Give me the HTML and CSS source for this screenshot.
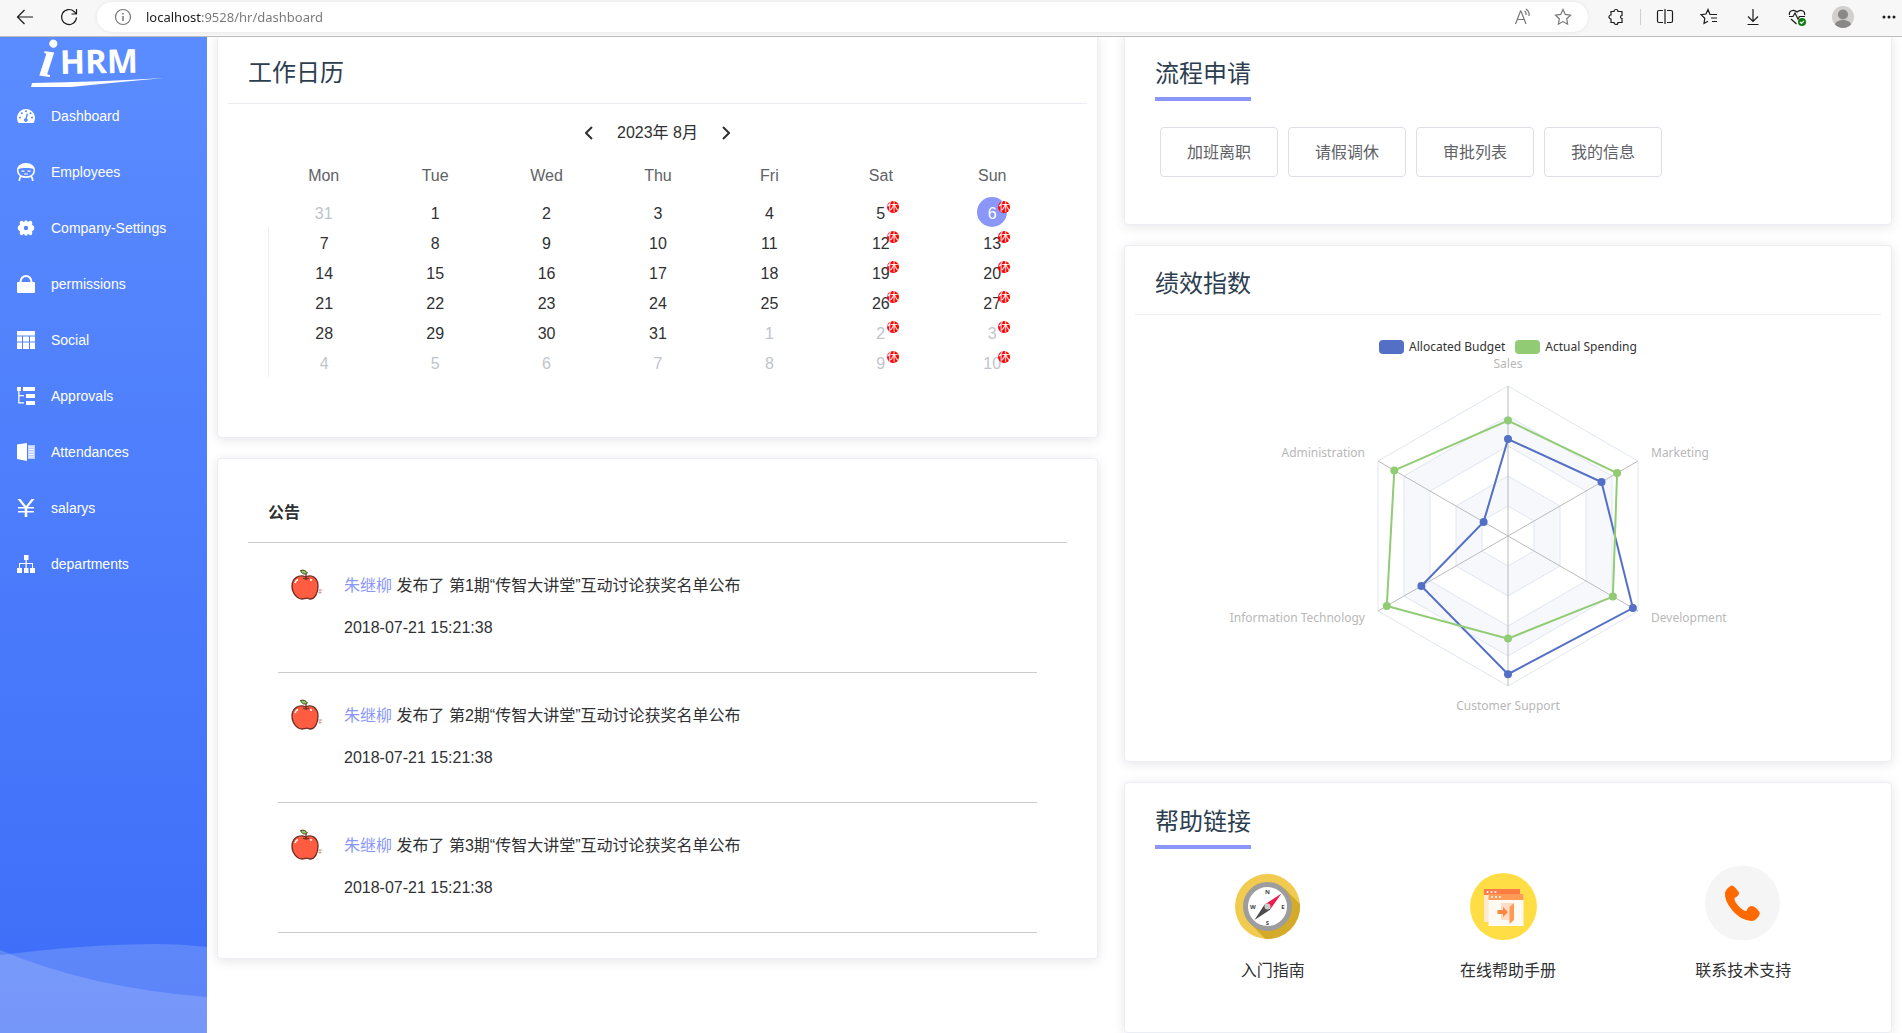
FILE: index.html
```html
<!DOCTYPE html>
<html lang="zh-CN">
<head>
<meta charset="utf-8">
<title>iHRM</title>
<link rel="stylesheet" href="styles.css">
</head>
<body>
<header class="browser">
  <button class="nav-btn" type="button" aria-label="Back"><svg width="18" height="18" viewBox="0 0 18 18"><path d="M17 9H1.500M8.500 2L1.500 9l7 7"/></svg></button>
  <button class="nav-btn" type="button" aria-label="Refresh"><svg width="18" height="18" viewBox="0 0 18 18"><path d="M16.500 9.500a7.500 7.500 0 1 1-2.200-5.800L16.500 6M16.500 1v5h-5"/></svg></button>
  <div class="address">
    <svg class="soft" width="18" height="18" viewBox="0 0 18 18"><circle cx="9" cy="9" r="7.500"/><path d="M9 8v5M9 5v1.500" stroke-width="1.500"/></svg>
    <input class="url" type="text" aria-label="Address" value="localhost:9528/hr/dashboard">
    <button class="addr-btn" type="button" aria-label="Read aloud"><svg class="soft" width="18" height="18" viewBox="0 0 18 18"><path d="M1.500 16L6.500 3h.500l5 13M3.500 11.500h7M10.500 3a4 4 0 0 1 1.500 4M12 1a7 7 0 0 1 3 7"/></svg></button>
    <button class="addr-btn" type="button" aria-label="Add to favourites"><svg class="soft" width="18" height="18" viewBox="0 0 18 18"><path d="M9 1.500l2.300 4.900 5.200.700-3.800 3.700.900 5.400L9 13.600l-4.600 2.600.900-5.400L1.500 7.100l5.200-.700z"/></svg></button>
  </div>
  <div class="tools">
    <button class="tool" type="button" aria-label="Extensions"><svg width="18" height="18" viewBox="0 0 18 18"><path d="M4 3.500h3a2 2 0 0 1 4 0h4v4a1.500 1.500 0 0 0-1.500 1.500 1.500 1.500 0 0 0 1.500 1.500v4h-4a2 2 0 0 1-4 0H4V11a2 2 0 0 1 0-4z"/></svg></button>
    <span class="sep"></span>
    <button class="tool" type="button" aria-label="Split screen"><svg width="18" height="18" viewBox="0 0 18 18"><path d="M7 2.500H3a1.500 1.500 0 0 0-1.500 1.500v9A1.500 1.500 0 0 0 3 14.500h4M11 2.500h4A1.500 1.500 0 0 1 16.500 4v9a1.500 1.500 0 0 1-1.500 1.500h-4M9 1v15"/></svg></button>
    <button class="tool" type="button" aria-label="Favourites"><svg width="18" height="18" viewBox="0 0 18 18"><path d="M12 6.500H10L8 1.500 6 6l-5 .700 3.800 3.600L4 15.500l4-2.200M11 6.500h6M11 10h6M12 13.500h5"/></svg></button>
    <button class="tool" type="button" aria-label="Downloads"><svg width="18" height="18" viewBox="0 0 18 18"><path d="M9 1v12M4 8.500l5 5 5-5M3.500 16.500h11"/></svg></button>
    <button class="tool" type="button" aria-label="Browser essentials"><svg width="18" height="18" viewBox="0 0 18 18"><path d="M1.500 7C.500 3 5.500.500 9 4c3.500-3.500 8.500-1 7.500 3M1 8.500h4L7 5l3 6 1.500-2.500H17M3 11l5.500 5"/><circle cx="14" cy="14" r="4" fill="#107c10" stroke="none"/><path d="M12 14l1.500 1.500L16 12.800" stroke="#fff"/></svg></button>
    <button class="tool tool-avatar" type="button" aria-label="Profile"><svg class="avatar" width="22" height="22" viewBox="0 0 22 22"><circle cx="11" cy="11" r="11" fill="#d2d0ce"/><circle cx="11" cy="8.500" r="5" fill="#8a8886"/><path d="M3 18.500c1-6 15-6 16 0a11 11 0 0 1-16 0z" fill="#8a8886"/></svg></button>
    <button class="tool tool-more" type="button" aria-label="More"><svg width="16" height="4" viewBox="0 0 16 4"><g fill="#1b1b1b" stroke="none"><circle cx="3" cy="2" r="1.500"/><circle cx="8" cy="2" r="1.500"/><circle cx="13" cy="2" r="1.500"/></g></svg></button>
  </div>
</header>

<div class="app">
  <aside class="sidebar">
    <a class="logo" href="#" aria-label="iHRM">
      <svg width="207" height="51" viewBox="0 0 207 51">
        <text class="logo-i" x="38" y="39" transform="rotate(8 44 39)">i</text>
        <text class="logo-name" x="60" y="37" transform="rotate(-1 60 37)">HRM</text>
        <path d="M32 46Q100 45 164 41Q120 45 71 50H31z"/>
      </svg>
    </a>
    <nav class="menu">
      <a href="#"><svg width="18" height="18" viewBox="0 0 18 18"><path fill-rule="evenodd" d="M1.500 16A9 9 0 1 1 16.500 16zM3 9.500a1 1 0 1 0 0 2 1 1 0 0 0 0-2zM4.800 5.300a1 1 0 1 0 0 2 1 1 0 0 0 0-2zM9 3.300a1 1 0 1 0 0 2 1 1 0 0 0 0-2zM13.500 5.300a1 1 0 1 0 0 2 1 1 0 0 0 0-2zM15 9.500a1 1 0 1 0 0 2 1 1 0 0 0 0-2zM9.700 6.500l-1.200 4.700a1.800 1.800 0 1 0 1.400.300l1.200-4.700z"/></svg>Dashboard</a>
      <a href="#"><svg width="18" height="18" viewBox="0 0 18 18"><path fill-rule="evenodd" d="M9 0c5 0 9 3 9 7 0 3-1 5-3 6 1 1 1.500 3 1.500 5H15l-1-3.800q-5 1.600-10 0L3 18H1.500c0-2 .500-4 1.500-5-2-1-3-3-3-6 0-4 4-7 9-7zM1.500 6c0 5 2 7.200 7.500 7.200s7.500-2.200 7.500-7.200c-2-1-4-1-7.500-1s-5.500 0-7.500 1z"/><path d="M4.500 7.500h3v1.300h-3zM10.500 7.500h3v1.300h-3zM7 10.500h4v1H7z"/></svg>Employees</a>
      <a href="#"><svg width="18" height="18" viewBox="0 0 18 18"><path fill-rule="evenodd" d="M7 3.200q.500-2 2-2t2 2q2-2 3.500-1.200 1.500 1.500.500 3.700 2.500.800 2.300 3.300 0 2.500-2.300 3.300 1 2.200-.500 3.700-1.500.800-3.500-1.200-.500 2-2 2t-2-2q-2 2-3.500 1.200-1.500-1.500-.500-3.700Q.700 11.500.700 9 .500 6.500 3 5.700 2 3.500 3.500 2 5 1.200 7 3.200zM9 6.800a2.200 2.200 0 1 0 0 4.400 2.200 2.200 0 0 0 0-4.400z"/></svg>Company-Settings</a>
      <a href="#"><svg width="18" height="18" viewBox="0 0 18 18"><path fill-rule="evenodd" d="M2.500 7a6.500 7 0 0 1 13 0H17a1 1 0 0 1 1 1v9a1 1 0 0 1-1 1H1a1 1 0 0 1-1-1V8a1 1 0 0 1 1-1zM4.500 7h9a4.500 5 0 0 0-9 0z"/></svg>permissions</a>
      <a href="#"><svg width="18" height="18" viewBox="0 0 18 18"><path d="M0 0h18v4.500H0zM0 5.500h5v5H0zM6 5.500h6v5H6zM13 5.500h5v5h-5zM0 11.500h5V18H0zM6 11.500h6V18H6zM13 11.500h5V18h-5z"/></svg>Social</a>
      <a href="#"><svg width="18" height="18" viewBox="0 0 18 18"><path d="M0 0h4v4H2.500v4H7v1.300H2.500v6H7v1.300H1.200V4H0zM6 0h12v4H6zM9 7h9v4H9zM9 14h9v4H9z"/></svg>Approvals</a>
      <a href="#"><svg width="18" height="18" viewBox="0 0 18 18"><path d="M0 1.500L10 0v18L0 16z"/><path opacity=".6" d="M11 2h7v14h-7z"/><path d="M11.500 4H17M11.500 6.500H17M11.500 9H17M11.500 11.500H17M11.500 14H17" stroke="#fff"/></svg>Attendances</a>
      <a href="#"><svg width="18" height="18" viewBox="0 0 18 18"><path d="M.500 0h3L9 7l5.500-7h3l-6.500 8h6v1.500h-6.700V12H17v1.500h-6.700V18H7.700v-4.500H1V12h6.700V9.500H1V8h6z"/></svg>salarys</a>
      <a href="#"><svg width="18" height="18" viewBox="0 0 18 18"><path d="M7 0h4.500v5h-1.700v3H16v5h2v5h-5v-5h2V9H9.800v4h1.700v5H7v-5h1.500V9H3v4h2v5H0v-5h2V8h6.500V5H7z"/></svg>departments</a>
    </nav>
    <svg class="waves" width="207" height="90" viewBox="0 0 207 90" preserveAspectRatio="none"><path d="M0 12Q90 1 155 1Q182 1 207 4V90H0z"/><path d="M0 7Q90 45 207 54V90H0z"/></svg>
  </aside>

  <main class="main">
    <div class="column">
      <section class="card calendar-card">
        <h2 class="title ruled">工作日历</h2>
        <div class="month">
          <button type="button" aria-label="Previous month"><svg width="8" height="14" viewBox="0 0 8 14"><path d="M7 1L1 7l6 6"/></svg></button>
          <span>2023年 8月</span>
          <button type="button" aria-label="Next month"><svg width="8" height="14" viewBox="0 0 8 14"><path d="M1 1l6 6-6 6"/></svg></button>
        </div>
        <table class="calendar">
          <thead><tr><th>Mon</th><th>Tue</th><th>Wed</th><th>Thu</th><th>Fri</th><th>Sat</th><th>Sun</th></tr></thead>
          <tbody>
            <tr><td class="other">31</td><td>1</td><td>2</td><td>3</td><td>4</td><td><span class="day">5<i>休</i></span></td><td><span class="day today">6<i>休</i></span></td></tr>
            <tr><td>7</td><td>8</td><td>9</td><td>10</td><td>11</td><td><span class="day">12<i>休</i></span></td><td><span class="day">13<i>休</i></span></td></tr>
            <tr><td>14</td><td>15</td><td>16</td><td>17</td><td>18</td><td><span class="day">19<i>休</i></span></td><td><span class="day">20<i>休</i></span></td></tr>
            <tr><td>21</td><td>22</td><td>23</td><td>24</td><td>25</td><td><span class="day">26<i>休</i></span></td><td><span class="day">27<i>休</i></span></td></tr>
            <tr><td>28</td><td>29</td><td>30</td><td>31</td><td class="other">1</td><td class="other"><span class="day">2<i>休</i></span></td><td class="other"><span class="day">3<i>休</i></span></td></tr>
            <tr><td class="other">4</td><td class="other">5</td><td class="other">6</td><td class="other">7</td><td class="other">8</td><td class="other"><span class="day">9<i>休</i></span></td><td class="other"><span class="day">10<i>休</i></span></td></tr>
          </tbody>
        </table>
      </section>

      <section class="card notice-card">
        <svg class="defs" width="0" height="0" aria-hidden="true"><symbol id="apple" viewBox="0 0 32 32"><path d="M15 8C8 5 1 9 1 17c0 7 5 13 10 13 2 0 3-.800 5-.800S17 30 19 30c5 0 8-6 8-13 0-8-6-12-12-9z" fill="#ff5c42" stroke="#6e2d20" stroke-width="1.300"/><path d="M15 9.500V4.500M12 9q3 2 6 0" fill="none" stroke="#6e2d20" stroke-width="1.300"/><path d="M9.500 1.500c3-1 5 0 7 2.500-3 2-5.500 1-7-2.500z" fill="#6edb5c" stroke="#6e2d20"/><path d="M4 14q1-3 3-3.500" fill="none" stroke="#fff" stroke-width="1.500"/><circle cx="20" cy="11" r="1" fill="#fff"/><path d="M27.500 21h4M27.500 23.500h3M29 20v5" stroke="#b98a80" stroke-width=".7"/></symbol></svg>
        <h3 class="notice-title">公告</h3>
        <ul class="notices">
          <li><svg width="32" height="32"><use href="#apple"/></svg><div><p><a href="#">朱继柳</a> 发布了 第1期“传智大讲堂”互动讨论获奖名单公布</p><time>2018-07-21 15:21:38</time></div></li>
          <li><svg width="32" height="32"><use href="#apple"/></svg><div><p><a href="#">朱继柳</a> 发布了 第2期“传智大讲堂”互动讨论获奖名单公布</p><time>2018-07-21 15:21:38</time></div></li>
          <li><svg width="32" height="32"><use href="#apple"/></svg><div><p><a href="#">朱继柳</a> 发布了 第3期“传智大讲堂”互动讨论获奖名单公布</p><time>2018-07-21 15:21:38</time></div></li>
        </ul>
      </section>
    </div>

    <div class="column">
      <section class="card">
        <h2 class="title tabbed"><span>流程申请</span></h2>
        <div class="actions">
          <button type="button">加班离职</button>
          <button type="button">请假调休</button>
          <button type="button">审批列表</button>
          <button type="button">我的信息</button>
        </div>
      </section>

      <section class="card">
        <h2 class="title ruled">绩效指数</h2>
        <div class="chart">
          <div class="legend"><span class="key budget">Allocated Budget</span><span class="key spending">Actual Spending</span></div>
          <svg class="radar" width="600" height="360" viewBox="-300 -179 600 360">
            <g class="rings">
              <path class="plain" d="M0-150L130-75V75L0 150-130 75V-75z"/>
              <path class="tint" d="M0-120L104-60V60L0 120-104 60V-60z"/>
              <path class="plain" d="M0-90L78-45V45L0 90-78 45V-45z"/>
              <path class="tint" d="M0-60L52-30V30L0 60-52 30V-30z"/>
              <path class="plain" d="M0-30L26-15V15L0 30-26 15V-15z"/>
            </g>
            <path class="axes" d="M0-150V150M-130-75L130 75M-130 75L130-75"/>
            <g class="series blue">
              <path d="M0-96.900L93.500-54 124.900 72.100 0 138.200-86.600 50-24.400-14.100z"/>
              <circle cx="0" cy="-96.900" r="4"/><circle cx="93.500" cy="-54" r="4"/><circle cx="124.900" cy="72.100" r="4"/><circle cx="0" cy="138.200" r="4"/><circle cx="-86.600" cy="50" r="4"/><circle cx="-24.400" cy="-14.100" r="4"/>
            </g>
            <g class="series green">
              <path d="M0-115.400L109.100-63 104.900 60.600 0 102.600-121.200 70-113.700-65.600z"/>
              <circle cx="0" cy="-115.400" r="4"/><circle cx="109.100" cy="-63" r="4"/><circle cx="104.900" cy="60.600" r="4"/><circle cx="0" cy="102.600" r="4"/><circle cx="-121.200" cy="70" r="4"/><circle cx="-113.700" cy="-65.600" r="4"/>
            </g>
            <g class="names">
              <text x="0" y="-168" text-anchor="middle">Sales</text>
              <text x="143" y="-79">Marketing</text>
              <text x="143" y="86">Development</text>
              <text x="0" y="174" text-anchor="middle">Customer Support</text>
              <text x="-143" y="86" text-anchor="end">Information Technology</text>
              <text x="-143" y="-79" text-anchor="end">Administration</text>
            </g>
          </svg>
        </div>
      </section>

      <section class="card">
        <h2 class="title tabbed"><span>帮助链接</span></h2>
        <div class="help">
          <a href="#">
            <svg width="76" height="76" viewBox="0 0 76 76">
              <circle cx="32.500" cy="41.500" r="32.500" fill="#f0cb50"/>
              <path d="M50 24L65 39A32.500 32.500 0 0 1 30 73.800L15 58z" fill="#d4aa2a"/>
              <circle cx="32.500" cy="41.500" r="22" fill="#fff" stroke="#9d9d9d" stroke-width="5"/>
              <path d="M30.500 39L46.500 28.500 35.500 44z" fill="#ea1d4c"/><path d="M29.500 39.500L19.500 55 35.500 44.500z" fill="#4d4d4d"/><circle cx="32.500" cy="41.500" r="3" fill="#ccc"/>
              <g class="compass"><text x="32.500" y="28.500">N</text><text x="32.500" y="60">S</text><text x="18" y="44">W</text><text x="48" y="44">E</text></g>
            </svg>
            入门指南</a>
          <a href="#">
            <svg width="76" height="76" viewBox="0 0 76 76">
              <circle cx="33.500" cy="41.500" r="33.500" fill="#ffde45"/>
              <path d="M14 24h36v33H14z" fill="#ffe9d0"/><path d="M14 24h36v6H14z" fill="#ff7d45"/>
              <path d="M18.500 29h35v32h-35z" fill="#fffaf2"/><path d="M18.500 29h35v6h-35z" fill="#ff9a57"/>
              <g fill="#fff"><circle cx="17.500" cy="27" r="1"/><circle cx="21.500" cy="27" r="1"/><circle cx="25.500" cy="27" r="1"/><circle cx="22" cy="32" r="1"/><circle cx="26" cy="32" r="1"/><circle cx="30" cy="32" r="1"/></g>
              <path d="M31 38h13v17H31z" fill="#ffdcc5"/><path d="M44 38v17l-4.500 4V42z" fill="#ff9a57"/><path d="M27.500 45h5.500v-3l5 5-5 5v-3h-5.500z" fill="#ff8742"/>
            </svg>
            在线帮助手册</a>
          <a href="#">
            <svg width="76" height="76" viewBox="0 0 76 76">
              <circle cx="37.500" cy="38" r="37.500" fill="#f5f5f5"/>
              <path d="M20 27.500q2-5 6.500-7 2.500-.500 7.500 7 .500 3-4.500 5.500-.500 3 4 8t8 5q1.500-5 5.500-5 3.500.500 7.500 6 1 2-1 4.500-3.500 4.500-7 4.500Q35 55 27 45t-7-17.500z" fill="#ff6a00"/>
            </svg>
            联系技术支持</a>
        </div>
      </section>
    </div>
  </main>
</div>
</body>
</html>
```

FILE: styles.css
```css
* { box-sizing: border-box; }

body {
  margin: 0;
  min-height: 100vh;
  display: flex;
  flex-direction: column;
  background: #fff;
  color: #303133;
  font: 16px/24px "Liberation Sans", "Noto Sans CJK SC", sans-serif;
}

h2, h3, p, ul { margin: 0; padding: 0; font-weight: 400; }
a { color: inherit; text-decoration: none; }
button {
  padding: 0;
  border: 0;
  background: none;
  color: inherit;
  font: inherit;
}
svg { display: block; flex: none; }

/* Browser toolbar */
.browser {
  position: relative;
  z-index: 1;
  height: 37px;
  display: flex;
  align-items: flex-start;
  padding: 2px 0 0 9px;
  gap: 12px;
  background: #f7f7f7;
  border-bottom: 1px solid #bdbdbd;
}
.browser svg { fill: none; stroke: #1b1b1b; stroke-width: 1.2; }
.browser svg.soft { stroke: #767676; }
.browser svg.avatar { stroke: none; }
.nav-btn { width: 32px; height: 30px; display: grid; place-items: center; }
.address {
  flex: 1;
  height: 30px;
  display: flex;
  align-items: center;
  padding: 0 16px 0 17px;
  border-radius: 15px;
  background: #fff;
  box-shadow: 0 0 4px rgba(0, 0, 0, .08);
}
.url {
  flex: 1;
  min-width: 0;
  margin-left: 14px;
  padding: 0;
  border: 0;
  outline: 0;
  background: linear-gradient(90deg, #1b1b1b 56px, #767676 56px);
  -webkit-background-clip: text;
  background-clip: text;
  color: transparent;
  font: 13px/20px "Noto Sans", sans-serif;
}
.addr-btn { width: 18px; margin-left: 22px; }
.tools { display: flex; align-items: center; height: 30px; margin-left: -6px; }
.tool { width: 44px; display: grid; place-items: center; }
.tool-avatar { width: 48px; }
.tool-more { width: 35px; padding-left: 8px; }
.sep { width: 1px; height: 16px; margin: 0 2px; background: #d0d0d0; }

/* Page frame */
.app { flex: 1; display: flex; }
.sidebar {
  position: relative;
  flex: none;
  width: 207px;
  background: linear-gradient(0deg, #3d6df8, #5b8cff);
  color: #fff;
}
.sidebar svg { fill: #fff; }
.logo { display: block; height: 51px; }
.logo svg { overflow: visible; }
.logo-i { font: italic bold 54px "Liberation Serif", serif; }
.logo-name { font: 700 33px "Open Sans", sans-serif; }
.menu a {
  height: 56px;
  display: flex;
  align-items: center;
  gap: 16px;
  padding-left: 17px;
  font-size: 14px;
}
.waves { position: absolute; left: 0; bottom: 0; width: 100%; }
.waves path { fill-opacity: .16; }

.main {
  flex: 1;
  min-width: 0;
  display: grid;
  grid-template-columns: 881fr 768fr;
  align-items: start;
  gap: 26px;
  margin-top: -3px;
  padding: 0 10px;
}
.column { display: flex; flex-direction: column; gap: 20px; min-width: 0; }
.card {
  border: 1px solid #ebeef5;
  border-radius: 4px;
  background: #fff;
  box-shadow: 0 2px 12px rgba(0, 0, 0, .1);
}

.title { font-size: 24px; line-height: 32px; color: #2c3e50; }
.ruled { margin: 0 10px; padding: 22px 20px 14px; border-bottom: 1px solid #ebeef5; }
.tabbed { display: flex; padding: 23px 30px 0; }
.tabbed span { padding-bottom: 7px; border-bottom: 4px solid #8a97f8; }

/* Calendar */
.calendar-card { padding-bottom: 60px; }
.month { display: flex; justify-content: center; gap: 16px; padding: 17px 0 15px; }
.month button { width: 24px; display: grid; place-items: center; }
.month svg { fill: none; stroke: #303133; stroke-width: 2; }
.calendar {
  width: calc(100% - 99px);
  margin: 0 49px 0 50px;
  table-layout: fixed;
  border-spacing: 0;
  text-align: center;
}
.calendar th { padding: 1px 0 6px; line-height: 30px; font-weight: 400; color: #606266; }
.calendar td { height: 30px; padding: 4px 0 0; line-height: 26px; }
.calendar td:has(.day) { padding: 0; }
.calendar tr + tr td:first-child { border-left: 1px solid #ebeef5; }
.calendar .other { color: #c0c4cc; }
.day { position: relative; display: block; width: 30px; height: 30px; margin: 0 auto; padding-top: 4px; border-radius: 50%; }
.day i {
  position: absolute;
  left: 21px;
  top: 4px;
  width: 12px;
  height: 12px;
  border-radius: 50%;
  background: #f00;
  color: #fff;
  font-style: normal;
  font-size: 11px;
  line-height: 12px;
}
.today { background: #8a97f8; color: #fff; }

/* Notices */
.notice-card { padding-bottom: 25px; }
.defs { position: absolute; }
.notice-title {
  margin: 0 30px;
  padding: 42px 20px 17px;
  border-bottom: 1px solid #ccc;
  font-size: 16px;
  font-weight: 700;
}
.notices { margin: 0 60px; list-style: none; }
.notices li {
  display: flex;
  gap: 21px;
  padding: 26px 0 32px 13px;
  border-bottom: 1px solid #ccc;
}
.notices div { padding-top: 5px; }
.notices a { color: #8a97f8; }
.notices time { display: block; margin-top: 18px; }

/* Requests */
.actions { display: flex; gap: 10px; padding: 26px 35px 47px; }
.actions button {
  width: 118px;
  height: 50px;
  padding-top: 2px;
  border: 1px solid #dcdfe6;
  border-radius: 4px;
  background: #fff;
  color: #606266;
}

/* Radar chart */
.chart {
  display: flex;
  flex-direction: column;
  align-items: center;
  padding: 22px 0 44px;
  font: 12px/20px "Noto Sans", sans-serif;
}
.radar { overflow: visible; }
.legend { display: flex; gap: 10px; color: #333; }
.key { display: flex; align-items: center; gap: 5px; }
.key::before { content: ""; width: 25px; height: 14px; border-radius: 4px; background: #5470c6; }
.spending::before { background: #91cc75; }
.rings { stroke: #e0e6f1; }
.plain { fill: #fff; }
.tint { fill: #f6f8fc; }
.axes { stroke: #bbb; }
.series path { fill: none; stroke-width: 2; }
.blue { fill: #5470c6; stroke: #5470c6; }
.green { fill: #91cc75; stroke: #91cc75; }
.series circle { stroke: none; }
.names { fill: #b8b8b8; }

/* Help links */
.help {
  display: grid;
  grid-template-columns: repeat(3, 1fr);
  padding: 16px 30px 49px;
}
.help a { display: flex; flex-direction: column; align-items: center; gap: 18px; }
.compass { font: 700 6px "Open Sans", sans-serif; text-anchor: middle; fill: #444; }
```
